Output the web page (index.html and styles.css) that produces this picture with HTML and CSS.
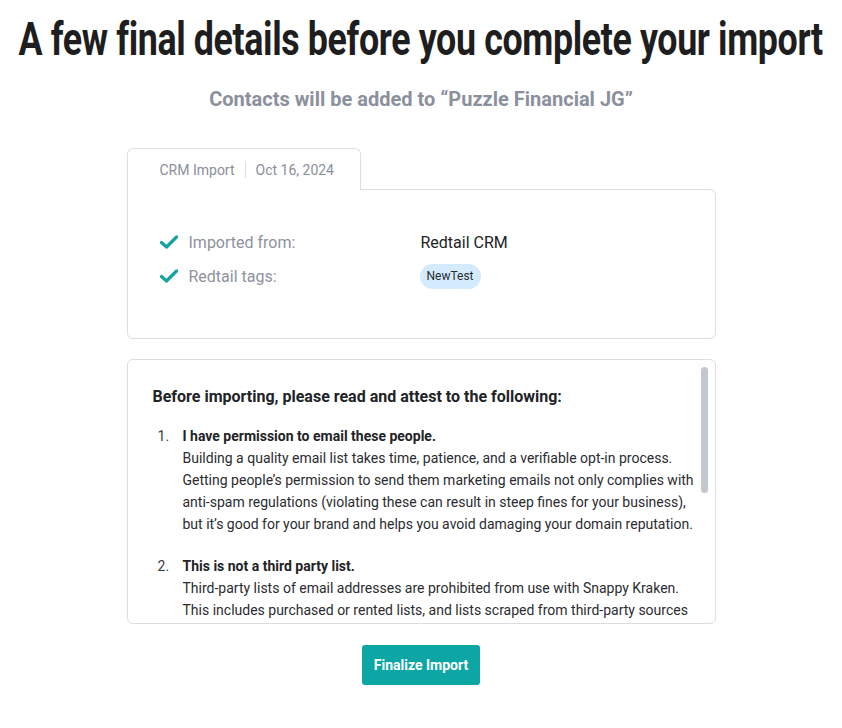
FILE: index.html
```html
<!DOCTYPE html>
<html lang="en">
<head>
<meta charset="utf-8">
<title>Finalize Import</title>
<link rel="stylesheet" href="styles.css">
</head>
<body>
<main class="page">
  <h1 class="title">A few final details before you complete your import</h1>
  <p class="subtitle">Contacts will be added to “Puzzle Financial JG”</p>

  <section class="summary">
    <div class="tab">
      <span class="tab-item">CRM Import</span>
      <span class="tab-sep"></span>
      <span class="tab-item">Oct 16, 2024</span>
    </div>
    <div class="card info">
      <div class="info-row">
        <div class="info-label">
          <svg class="check" viewBox="0 0 18 14" width="18" height="14"><path d="M1.5 7.5 L6.5 12 L16.5 2" fill="none" stroke="#14a3a1" stroke-width="3.2" stroke-linecap="round" stroke-linejoin="round"/></svg>
          <span>Imported from:</span>
        </div>
        <div class="info-value">Redtail CRM</div>
      </div>
      <div class="info-row">
        <div class="info-label">
          <svg class="check" viewBox="0 0 18 14" width="18" height="14"><path d="M1.5 7.5 L6.5 12 L16.5 2" fill="none" stroke="#14a3a1" stroke-width="3.2" stroke-linecap="round" stroke-linejoin="round"/></svg>
          <span>Redtail tags:</span>
        </div>
        <div class="info-value"><span class="pill">NewTest</span></div>
      </div>
    </div>
  </section>

  <section class="card terms">
    <div class="terms-scroll">
      <h2 class="terms-title">Before importing, please read and attest to the following:</h2>
      <ol class="terms-list">
        <li>
          <div class="item-body">
            <strong>I have permission to email these people.</strong>
            <p>Building a quality email list takes time, patience, and a verifiable opt-in process. Getting people’s permission to send them marketing emails not only complies with anti-spam regulations (violating these can result in steep fines for your business), but it’s good for your brand and helps you avoid damaging your domain reputation.</p>
          </div>
        </li>
        <li>
          <div class="item-body">
            <strong>This is not a third party list.</strong>
            <p>Third-party lists of email addresses are prohibited from use with Snappy Kraken. This includes purchased or rented lists, and lists scraped from third-party sources</p>
          </div>
        </li>
      </ol>
    </div>
    <div class="scrollbar" aria-hidden="true"><div class="scroll-thumb"></div></div>
  </section>

  <div class="actions">
    <button class="btn-primary" type="button">Finalize Import</button>
  </div>
</main>
</body>
</html>
```

FILE: styles.css
```css
* { box-sizing: border-box; }

body {
  margin: 0;
  background: #ffffff;
  font-family: Roboto, "Liberation Sans", sans-serif;
  color: #222326;
}

.page {
  display: flex;
  flex-direction: column;
  align-items: center;
  padding-top: 12px;
}

.title {
  margin: 0;
  font-family: Roboto, "Liberation Sans", sans-serif;
  font-weight: 700;
  font-size: 47px;
  line-height: 54px;
  letter-spacing: -0.5px;
  color: #1e1e20;
  white-space: nowrap;
  transform: scaleX(0.762);
  transform-origin: center;
}

.subtitle {
  margin: 20px 0 0;
  font-size: 20px;
  line-height: 26px;
  font-weight: 700;
  color: #8b909d;
}

.summary {
  width: 589px;
  margin-top: 36px;
  display: flex;
  flex-direction: column;
}

.tab {
  align-self: flex-start;
  width: 234px;
  height: 42px;
  margin-bottom: -1px;
  padding-left: 32px;
  display: flex;
  align-items: center;
  gap: 10px;
  border: 1px solid #dcdee3;
  border-bottom: none;
  border-radius: 6px 6px 0 0;
  background: #fff;
  position: relative;
  z-index: 1;
  font-size: 14px;
  color: #8a8f9b;
}

.tab-sep {
  width: 1px;
  height: 17px;
  background: #dcdee3;
}

.card {
  border: 1px solid #dcdee3;
  border-radius: 6px;
  background: #fff;
}

.info {
  border-top-left-radius: 0;
  height: 150px;
  padding: 39px 32px 0;
  display: flex;
  flex-direction: column;
  gap: 8px;
}

.info-row {
  display: grid;
  grid-template-columns: 261px 1fr;
  align-items: center;
  height: 26px;
}

.info-label {
  display: flex;
  align-items: center;
  gap: 11px;
  font-size: 16px;
  color: #8e929e;
}

.check { flex: none; }

.info-value {
  font-size: 16px;
  color: #222326;
}

.pill {
  display: inline-flex;
  align-items: center;
  height: 25px;
  padding: 0 7px;
  margin-left: -1px;
  border-radius: 13px;
  background: #d3ebfc;
  font-size: 12px;
  color: #2a2b2e;
}

.terms {
  width: 589px;
  height: 265px;
  margin-top: 20px;
  position: relative;
  overflow: hidden;
}

.terms-scroll {
  height: 100%;
  padding: 25px 0 0 25px;
}

.scrollbar {
  position: absolute;
  top: 7px;
  bottom: 7px;
  right: 7px;
  width: 7px;
}

.scroll-thumb {
  height: 126px;
  border-radius: 4px;
  background: #c3c7d0;
}

.terms-title {
  margin: 0;
  font-size: 16px;
  line-height: 24px;
  font-weight: 700;
  color: #222326;
}

.terms-list {
  margin: 16px 0 0;
  padding: 0 8px 0 0;
  list-style: none;
  counter-reset: item;
  font-size: 14px;
  line-height: 22px;
  color: #2b2c30;
}

.terms-list li {
  counter-increment: item;
  display: grid;
  grid-template-columns: 30px 1fr;
}

.terms-list li::before {
  content: counter(item) ".";
  padding-left: 5px;
  color: #3a3b3f;
}

.terms-list li + li { margin-top: 20px; }

.terms-list strong {
  display: block;
  font-weight: 700;
  color: #222326;
}

.terms-list p { margin: 0; }

.actions {
  margin-top: 21px;
  display: flex;
  justify-content: center;
}

.btn-primary {
  width: 118px;
  height: 40px;
  border: none;
  border-radius: 3px;
  background: #0ca6a4;
  color: #fff;
  font-family: Roboto, "Liberation Sans", sans-serif;
  font-size: 14px;
  font-weight: 700;
  cursor: pointer;
}
```
